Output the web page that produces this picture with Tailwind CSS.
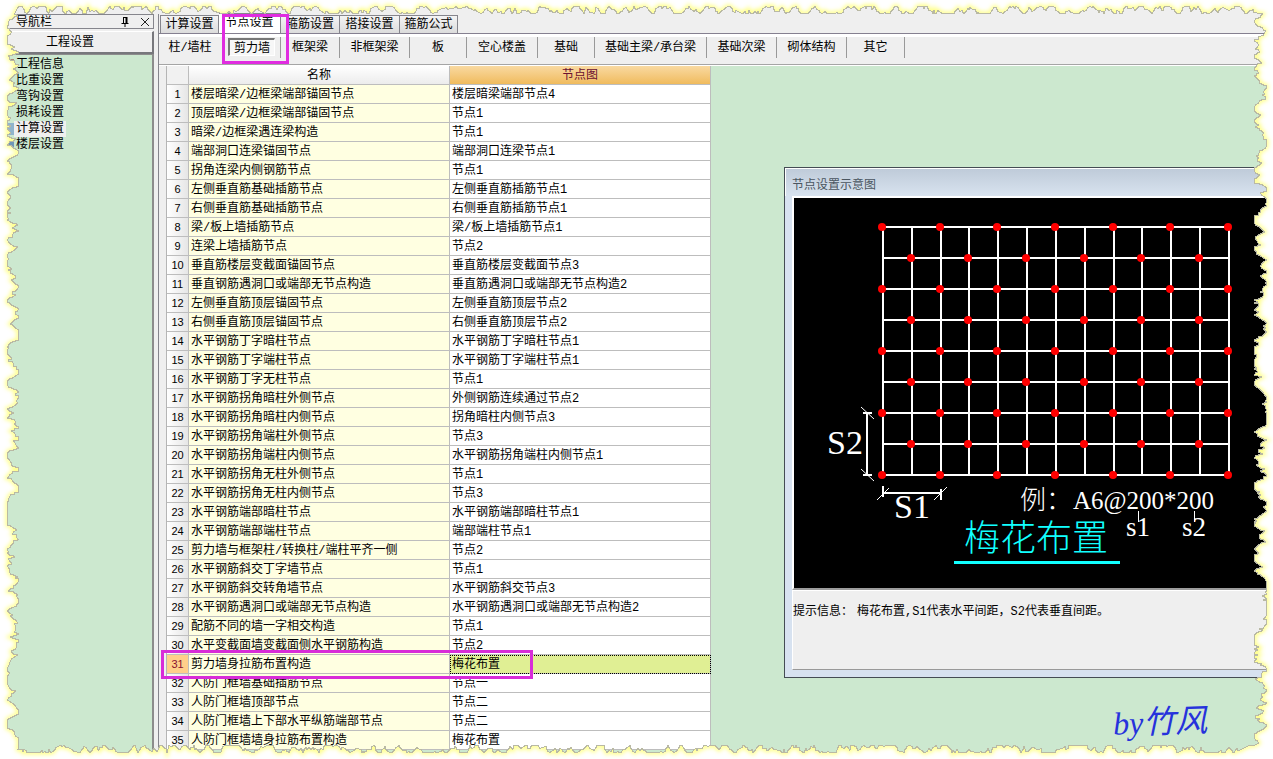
<!DOCTYPE html>
<html lang="zh-CN">
<head>
<meta charset="utf-8">
<title>节点设置</title>
<script src="https://cdn.jsdelivr.net/npm/@tailwindcss/browser@4"></script>
</head>
<body class="relative h-screen overflow-hidden bg-[#efefef] font-['Liberation_Mono','Noto_Sans_CJK_SC',sans-serif] text-xs leading-4 text-black">
<div class="flex h-full pt-[14px]">

  <!-- navigation panel -->
  <aside class="flex w-[154px] shrink-0 flex-col">
    <header class="flex h-[15px] items-center border border-[#85858c] pl-[15px] pr-1">
      <h2 class="flex-1 pt-[2px]">导航栏</h2>
      <button aria-label="固定" class="mr-3"><svg class="h-[10px] w-2" viewBox="0 0 8 10" fill="none" stroke="#000"><path d="M2.5 1v5M2 .5h4.5M.5 6.5h7M4 7v3"/><path d="M5.5 1v5" stroke-width="2"/></svg></button>
      <button aria-label="关闭"><svg class="h-2 w-2" viewBox="0 0 8 8" stroke="#222"><path d="M0 0l8 8M8 0L0 8"/></svg></button>
    </header>
    <button class="mt-[2px] h-[23px] border-b-2 border-r-2 border-t border-b-[#77777c] border-r-[#77777c] border-t-white bg-[#efefef] pr-3 pt-[2px]">工程设置</button>
    <ul class="flex-1 border-r-2 border-t border-[#8c8c8c] bg-[#cce8cf] pl-2 pt-[2px]">
      <li class="flex items-center"><i class="h-3 w-[6px] bg-[#b08a78]"></i><a href="#" class="h-4 px-[2px]">工程信息</a></li>
      <li class="flex items-center"><i class="h-3 w-[6px]"></i><a href="#" class="h-4 px-[2px]">比重设置</a></li>
      <li class="flex items-center"><i class="h-3 w-[6px]"></i><a href="#" class="h-4 px-[2px]">弯钩设置</a></li>
      <li class="flex items-center"><i class="h-3 w-[6px]"></i><a href="#" class="h-4 px-[2px]">损耗设置</a></li>
      <li class="flex items-center"><i class="h-3 w-[6px] bg-[#8fb4cc]"></i><a href="#" aria-current="page" class="h-4 bg-[#efefef] px-[2px]">计算设置</a></li>
      <li class="flex items-center"><i class="h-3 w-[6px] bg-[#6f97b8]"></i><a href="#" class="h-4 px-[2px]">楼层设置</a></li>
    </ul>
  </aside>
  <div class="w-1 shrink-0 bg-[#efefef]"></div>

  <main class="flex min-w-0 flex-1 flex-col border-l border-[#85858c]">
    <!-- main tabs -->
    <nav class="flex h-5 items-end border-b border-[#858090] pl-px">
      <button class="h-[18px] w-[59px] whitespace-nowrap border-l border-r border-t border-[#85858c] bg-linear-to-b from-[#f4f4f4] to-[#dcdcdc] pt-px">计算设置</button>
      <button class="h-5 w-[62px] whitespace-nowrap border-r border-t border-[#85858c] bg-white pb-px">节点设置</button>
      <button class="h-[18px] w-[59px] whitespace-nowrap border-r border-t border-[#85858c] bg-linear-to-b from-[#f4f4f4] to-[#dcdcdc] pt-px">箍筋设置</button>
      <button class="h-[18px] w-[60px] whitespace-nowrap border-r border-t border-[#85858c] bg-linear-to-b from-[#f4f4f4] to-[#dcdcdc] pt-px">搭接设置</button>
      <button class="h-[18px] w-[58px] whitespace-nowrap border-r border-t border-[#85858c] bg-linear-to-b from-[#f4f4f4] to-[#dcdcdc] pt-px">箍筋公式</button>
    </nav>
    <!-- member tabs -->
    <nav class="flex h-[31px] items-start whitespace-nowrap border-b border-t-[3px] border-b-[#a5a5a5] border-t-white pl-[3px]">
      <button class="h-[21px] w-[60px] pr-1 pt-px">柱/墙柱</button>
      <span class="flex h-[21px] w-[59px] border-r border-[#999] pl-[6px] pt-px"><button class="h-[18px] w-[47px] border-b border-l-2 border-r border-t-2 border-b-white border-l-[#777] border-r-white border-t-[#777] bg-[#f7f7f7] pt-px leading-4">剪力墙</button></span>
      <button class="h-[21px] w-[59px] border-r border-[#999] pt-px">框架梁</button>
      <button class="h-[21px] w-[70px] border-r border-[#999] pt-px">非框架梁</button>
      <button class="h-[21px] w-[57px] border-r border-[#999] pt-px">板</button>
      <button class="h-[21px] w-[71px] border-r border-[#999] pt-px">空心楼盖</button>
      <button class="h-[21px] w-[57px] border-r border-[#999] pt-px">基础</button>
      <button class="h-[21px] w-[112px] border-r border-[#999] pt-px">基础主梁/承台梁</button>
      <button class="h-[21px] w-[70px] border-r border-[#999] pt-px">基础次梁</button>
      <button class="h-[21px] w-[70px] border-r border-[#999] pt-px">砌体结构</button>
      <button class="h-[21px] w-[58px] border-r border-[#999] pt-px">其它</button>
    </nav>
    <div class="min-h-0 flex-1 border-t border-white bg-[#efefef] pl-[7px]">
      <div class="h-full overflow-hidden border-l border-[#b5b5b5] bg-[#cce8cf]">
        <table class="w-[544px] table-fixed border-separate border-spacing-0">
          <colgroup><col class="w-[22px]"><col class="w-[261px]"><col class="w-[261px]"></colgroup>
          <thead>
            <tr class="h-[19px]">
              <th class="border-b border-r border-[#bdbdbd] bg-[#f1f1f1] p-0"></th>
              <th class="border-b border-r border-[#bdbdbd] bg-linear-to-b from-white to-[#ececec] px-0 pb-0 pt-[2px] font-normal">名称</th>
              <th class="border-b border-r border-[#bdbdbd] bg-linear-to-b from-[#f9d9a0] to-[#f0bb5c] px-0 pb-0 pt-[2px] font-normal text-[#6b1030]">节点图</th>
            </tr>
          </thead>
          <tbody id="rows"></tbody>
        </table>
      </div>
    </div>
  </main>
</div>

<!-- preview window -->
<section class="absolute left-[784px] right-0 top-[167px] flex h-[511px] flex-col border-y border-l border-[#444c54] bg-[#d7e2f0]">
  <h3 class="h-7 border-l border-t border-white bg-linear-to-b from-[#bfcbd9] to-[#d8e3ef] pl-[6px] pt-[9px] text-[#4a5560]">节点设置示意图</h3>
  <div class="ml-[7px] flex flex-1 flex-col">
    <div class="border-b-2 border-l-2 border-t-2 border-b-[#9c9c9c] border-l-white border-t-white bg-black">
      <svg class="block h-[390px] w-[473px]" viewBox="794 198 473 390" role="img" aria-label="梅花布置">
        <g id="grid" stroke="#fff" stroke-width="2"></g>
        <g id="dots" fill="#f00"></g>
        <g stroke="#fff" fill="none">
          <path stroke-width="2" d="M867 413v62M863 413h9M863 475h9M883 493h58M883 486v11M941 489v11"/>
          <path d="M861 407l13 12M861 469l13 12M877 500l12-12M934 500l13-13M1138.500 511v11M1194.500 511v11"/>
        </g>
        <path d="M954 562.500h166" stroke="#1ff" stroke-width="3"/>
        <g fill="#fff" font-family="Liberation Serif, Noto Sans CJK SC, serif">
          <text x="827" y="454" font-size="34">S2</text>
          <text x="894" y="518" font-size="34">S1</text>
          <text x="1020" y="509" font-size="26" font-weight="300">例：</text>
          <text x="1073" y="509" font-size="25">A6@200*200</text>
          <text x="1126" y="536" font-size="27">s1</text>
          <text x="1182" y="536" font-size="27">s2</text>
        </g>
        <text x="964" y="551" font-size="36" font-weight="300" fill="#1ff" font-family="Noto Sans CJK SC, sans-serif">梅花布置</text>
      </svg>
    </div>
    <p class="flex-1 border-b border-l border-t border-b-[#999] border-l-white border-t-white bg-[#efefef] pt-[13px]">提示信息：<span class="ml-1">梅花布置,S1代表水平间距，S2代表垂直间距。</span></p>
  </div>
  <div class="h-[7px]"></div>
</section>

<p class="absolute left-[1113px] top-[702px] -rotate-2 whitespace-nowrap font-['Liberation_Serif','Noto_Sans_CJK_SC',serif] text-[32px] italic leading-10 text-[#2632dc]">by竹风</p>

<!-- highlight frames -->
<div class="absolute left-[222px] top-[14px] h-[50px] w-[67px] border-[3px] border-[#e02ce0]"></div>
<div class="absolute left-[161px] top-[650px] h-[29px] w-[372px] border-[3px] border-[#d82cd8]"></div>

<!-- torn paper edge -->
<svg id="edge" class="pointer-events-none absolute inset-0 h-full w-full" aria-hidden="true">
  <defs>
    <clipPath id="outside"><path id="mask" clip-rule="evenodd"/></clipPath>
    <filter id="soft" x="-5%" y="-5%" width="110%" height="110%"><feGaussianBlur stdDeviation="2"/></filter>
  </defs>
  <g clip-path="url(#outside)">
    <rect width="100%" height="100%" fill="#fff"/>
    <path id="glow" fill="none" stroke="#ffff60" stroke-opacity=".8" stroke-width="4" filter="url(#soft)"/>
  </g>
  <path id="line" fill="none" stroke="#b9b9a4" stroke-width="1" shape-rendering="crispEdges"/>
</svg>

<script>
const data = `楼层暗梁/边框梁端部锚固节点|楼层暗梁端部节点4
顶层暗梁/边框梁端部锚固节点|节点1
暗梁/边框梁遇连梁构造|节点1
端部洞口连梁锚固节点|端部洞口连梁节点1
拐角连梁内侧钢筋节点|节点1
左侧垂直筋基础插筋节点|左侧垂直筋插筋节点1
右侧垂直筋基础插筋节点|右侧垂直筋插筋节点1
梁/板上墙插筋节点|梁/板上墙插筋节点1
连梁上墙插筋节点|节点2
垂直筋楼层变截面锚固节点|垂直筋楼层变截面节点3
垂直钢筋遇洞口或端部无节点构造|垂直筋遇洞口或端部无节点构造2
左侧垂直筋顶层锚固节点|左侧垂直筋顶层节点2
右侧垂直筋顶层锚固节点|右侧垂直筋顶层节点2
水平钢筋丁字暗柱节点|水平钢筋丁字暗柱节点1
水平钢筋丁字端柱节点|水平钢筋丁字端柱节点1
水平钢筋丁字无柱节点|节点1
水平钢筋拐角暗柱外侧节点|外侧钢筋连续通过节点2
水平钢筋拐角暗柱内侧节点|拐角暗柱内侧节点3
水平钢筋拐角端柱外侧节点|节点3
水平钢筋拐角端柱内侧节点|水平钢筋拐角端柱内侧节点1
水平钢筋拐角无柱外侧节点|节点1
水平钢筋拐角无柱内侧节点|节点3
水平钢筋端部暗柱节点|水平钢筋端部暗柱节点1
水平钢筋端部端柱节点|端部端柱节点1
剪力墙与框架柱/转换柱/端柱平齐一侧|节点2
水平钢筋斜交丁字墙节点|节点1
水平钢筋斜交转角墙节点|水平钢筋斜交节点3
水平钢筋遇洞口或端部无节点构造|水平钢筋遇洞口或端部无节点构造2
配筋不同的墙一字相交构造|节点1
水平变截面墙变截面侧水平钢筋构造|节点2
剪力墙身拉筋布置构造|梅花布置
人防门框墙基础插筋节点|节点一
人防门框墙顶部节点|节点二
人防门框墙上下部水平纵筋端部节点|节点二
人防门框墙墙身拉筋布置构造|梅花布置`.split('\n');
document.getElementById('rows').innerHTML = data.map((line, i) => {
  const [name, value] = line.split('|');
  const on = i === 30;
  const head = on ? 'bg-[#ffcf8a] text-[#8a1030]' : 'bg-linear-to-r from-white to-[#e6e6e6]';
  const cell = on ? 'bg-[#e0ef94] outline-1 outline-dotted -outline-offset-1 outline-black' : 'bg-white';
  return `<tr class="h-[19px] whitespace-nowrap leading-4"><th class="border-b border-r border-[#bdbdbd] p-0 font-['Liberation_Sans',sans-serif] text-[11px] font-normal ${head}">${i + 1}</th><td class="border-b border-r border-[#bdbdbd] bg-[#ffffe1] pb-0 pl-[2px] pr-0 pt-[2px]">${name}</td><td class="border-b border-r border-[#bdbdbd] pb-0 pl-[2px] pr-0 pt-[2px] ${cell}">${value}</td></tr>`;
}).join('');

// Rebar grid with staggered tie points
const xs = [883, 912, 941, 969, 998, 1027, 1056, 1085, 1114, 1142, 1171, 1200, 1229];
const ys = [227, 258, 289, 320, 351, 382, 413, 444, 475];
document.getElementById('grid').innerHTML =
  xs.map(x => `<path d="M${x} 227V475"/>`).join('') + ys.map(y => `<path d="M882 ${y}H1230"/>`).join('');
document.getElementById('dots').innerHTML =
  ys.flatMap((y, r) => xs.filter((x, c) => (r + c) % 2 === 0).map(x => `<circle cx="${x - 1}" cy="${y}" r="4"/>`)).join('');

function drawEdge() {
  const W = innerWidth, H = innerHeight;
  let seed = 7;
  const rnd = () => (seed = (seed * 16807) % 2147483647) / 2147483647;
  // Jagged profile: depth wanders between 0 and max, with occasional flat stretches
  const profile = (from, to, max, kick) => {
    const pts = [];
    let d = max / 2, dir = 1;
    for (let p = from; p < to; p += 1 + Math.floor(rnd() * 2)) {
      if (rnd() < .25) dir = -dir;
      d += dir * rnd() * kick;
      if (rnd() < .15) d += (rnd() - .5) * kick * 2;
      if (d < 0) { d = 0; if (rnd() < .4) dir = 1; }
      if (d > max) { d = max; if (rnd() < .4) dir = -1; }
      pts.push([p, Math.round(d)]);
    }
    return pts;
  };
  const top = profile(18, W - 18, 7, 3).map(([p, d]) => [p, 6.5 + d]);
  const right = profile(14, H - 14, 12, 4).map(([p, d]) => [W - 18.5 + d, p]);
  const bottom = profile(18, W - 18, 7, 3).map(([p, d]) => [p, H - 13.5 + d]).reverse();
  const left = profile(14, H - 14, 11, 4).map(([p, d]) => [7.5 + d, p]).reverse();
  const path = 'M' + [...top, ...right, ...bottom, ...left].map(p => p.join(' ')).join('L') + 'Z';
  document.getElementById('mask').setAttribute('d', `M0 0H${W}V${H}H0Z` + path);
  document.getElementById('glow').setAttribute('d', path);
  document.getElementById('line').setAttribute('d', path);
}
drawEdge();
addEventListener('resize', drawEdge);
</script>
</body>
</html>
